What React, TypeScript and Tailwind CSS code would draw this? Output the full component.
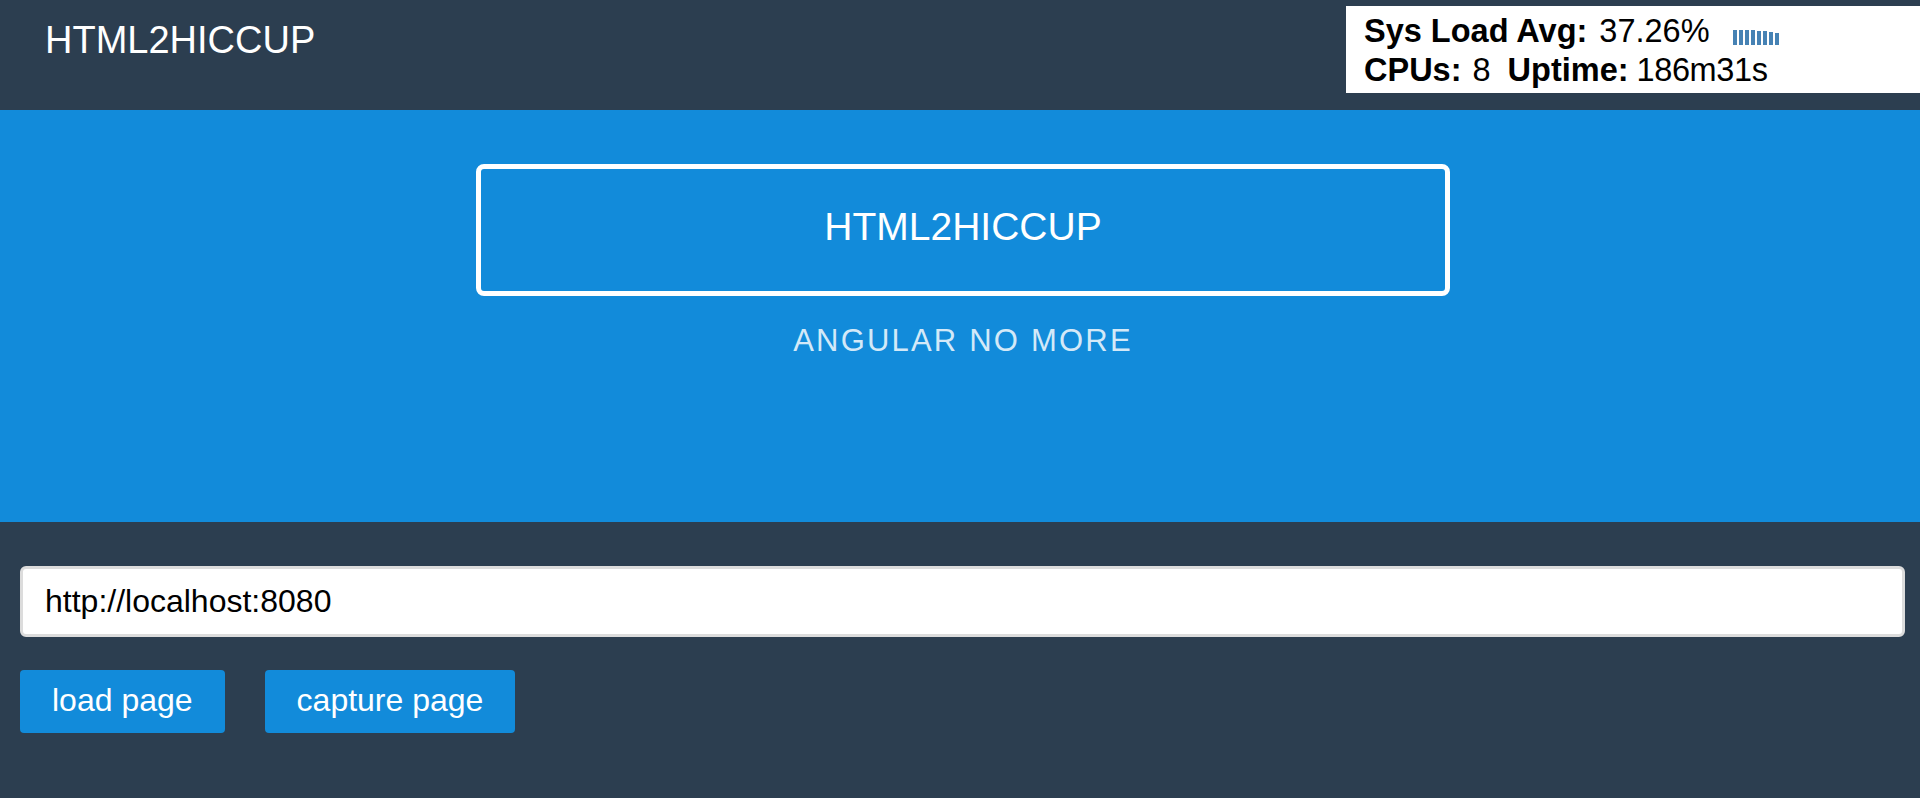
import { useState } from 'react';

// recent load samples, drawn as a tiny bar sparkline next to the average
const LOAD_SAMPLES = [15, 15, 15, 15, 14, 14, 13, 12];

function LoadBars() {
  return (
    <div className="mb-[6px] ml-[23px] flex h-[15px] items-end gap-[2px] self-end">
      {LOAD_SAMPLES.map((h, i) => (
        <span key={i} className="w-[4px] bg-[#4682b4]" style={{ height: h }} />
      ))}
    </div>
  );
}

function SysStats() {
  return (
    <div className="mt-[6px] h-[87px] w-[574px] bg-white pl-[18px] pt-[6px] text-[32.5px] leading-[39px] text-black">
      <div className="flex">
        <b>Sys Load Avg:</b>
        <span className="ml-[12px]">37.26%</span>
        <LoadBars />
      </div>
      <div className="flex">
        <b>CPUs:</b>
        <span className="ml-[11px]">8</span>
        <b className="ml-[17px]">Uptime:</b>
        <span className="ml-[8px] tracking-[-0.4px]">186m31s</span>
      </div>
    </div>
  );
}

export default function App() {
  const [url, setUrl] = useState('http://localhost:8080');

  return (
    <div className="min-h-[798px] bg-[#2c3e50] font-['Liberation_Sans',Arial,sans-serif]">
      {/* Top bar */}
      <header className="flex h-[110px] items-start justify-between">
        <h1 className="pl-[45px] pt-[21px] text-[38px] leading-[38px] text-white">HTML2HICCUP</h1>
        <SysStats />
      </header>

      {/* Hero */}
      <section className="flex h-[412px] flex-col items-center bg-[#128bda] pl-[6px] pt-[54px]">
        <div className="h-[132px] w-[974px] rounded-[8px] border-[5px] border-white pt-[38px] text-center text-[39px] leading-[39px] text-white">
          HTML2HICCUP
        </div>
        <p className="mt-[30px] text-[31px] leading-[30px] tracking-[2.2px] text-[#d3e9f8]">ANGULAR NO MORE</p>
      </section>

      {/* Controls */}
      <main className="pl-[20px] pr-[15px] pt-[44px]">
        <input
          value={url}
          onChange={e => setUrl(e.target.value)}
          className="h-[71px] w-full rounded-[6px] border-[3px] border-[#dcdcdc] bg-white pl-[22px] text-[32px] text-black outline-none"
        />
        <div className="mt-[33px] flex gap-[40px]">
          <button className="h-[63px] rounded-[4px] bg-[#128bda] px-8 pb-[3px] text-[32px] text-white">load page</button>
          <button className="h-[63px] rounded-[4px] bg-[#128bda] px-8 pb-[3px] text-[32px] text-white">capture page</button>
        </div>
      </main>
    </div>
  );
}
